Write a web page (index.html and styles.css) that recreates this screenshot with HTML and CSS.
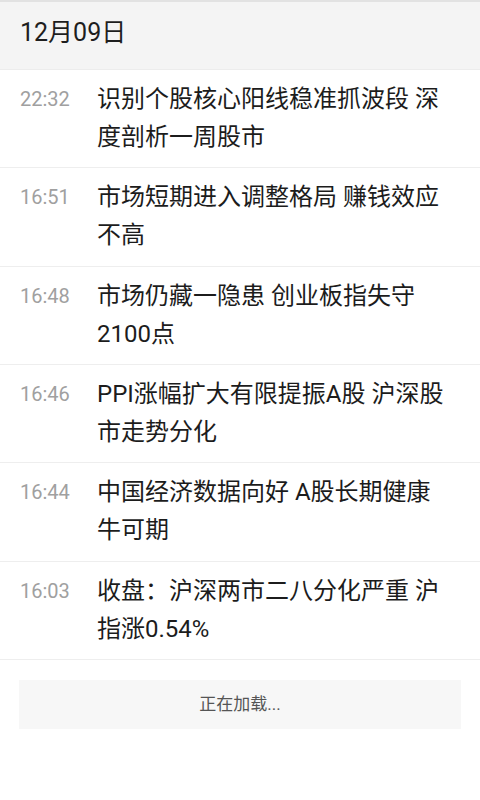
FILE: index.html
```html
<!DOCTYPE html>
<html lang="zh-CN">
<head>
<meta charset="utf-8">
<link rel="stylesheet" href="styles.css">
</head>
<body>
<div class="page">
  <div class="date-bar">12月09日</div>
  <ul class="news">
    <li class="item"><span class="time">22:32</span><span class="title">识别个股核心阳线稳准抓波段 深度剖析一周股市</span></li>
    <li class="item"><span class="time">16:51</span><span class="title">市场短期进入调整格局 赚钱效应不高</span></li>
    <li class="item"><span class="time">16:48</span><span class="title">市场仍藏一隐患 创业板指失守2100点</span></li>
    <li class="item"><span class="time">16:46</span><span class="title">PPI涨幅扩大有限提振A股 沪深股市走势分化</span></li>
    <li class="item"><span class="time">16:44</span><span class="title">中国经济数据向好 A股长期健康牛可期</span></li>
    <li class="item"><span class="time">16:03</span><span class="title">收盘：沪深两市二八分化严重 沪指涨0.54%</span></li>
  </ul>
  <div class="loading">正在加载...</div>
</div>
</body>
</html>
```
FILE: styles.css
```css
html, body {
  margin: 0;
  padding: 0;
  background: #ffffff;
}
.page {
  width: 480px;
  min-height: 800px;
  font-family: Roboto, "Noto Sans CJK SC", sans-serif;
  border-top: 2px solid #e2e2e2;
  box-sizing: border-box;
}
.date-bar {
  height: 68px;
  box-sizing: border-box;
  background: #f4f4f4;
  border-bottom: 1px solid #ececec;
  padding-left: 20px;
  font-size: 25px;
  line-height: 62px;
  color: #1e1e1e;
}
.news {
  list-style: none;
  margin: 0;
  padding: 0;
}
.item {
  display: flex;
  align-items: flex-start;
  height: 98.33px;
  box-sizing: border-box;
  padding: 10px 30px 0 20px;
  border-bottom: 1px solid #eeeeee;
}
.time {
  flex: 0 0 77px;
  font-size: 20px;
  line-height: 38px;
  padding-top: 0;
  color: #a0a0a0;
}
.title {
  flex: 1;
  font-size: 24px;
  line-height: 38px;
  color: #1c1c1c;
}
.loading {
  margin: 20px 19px 0;
  height: 49px;
  background: #f7f7f7;
  text-align: center;
  font-size: 17px;
  line-height: 49px;
  color: #555555;
}
```
